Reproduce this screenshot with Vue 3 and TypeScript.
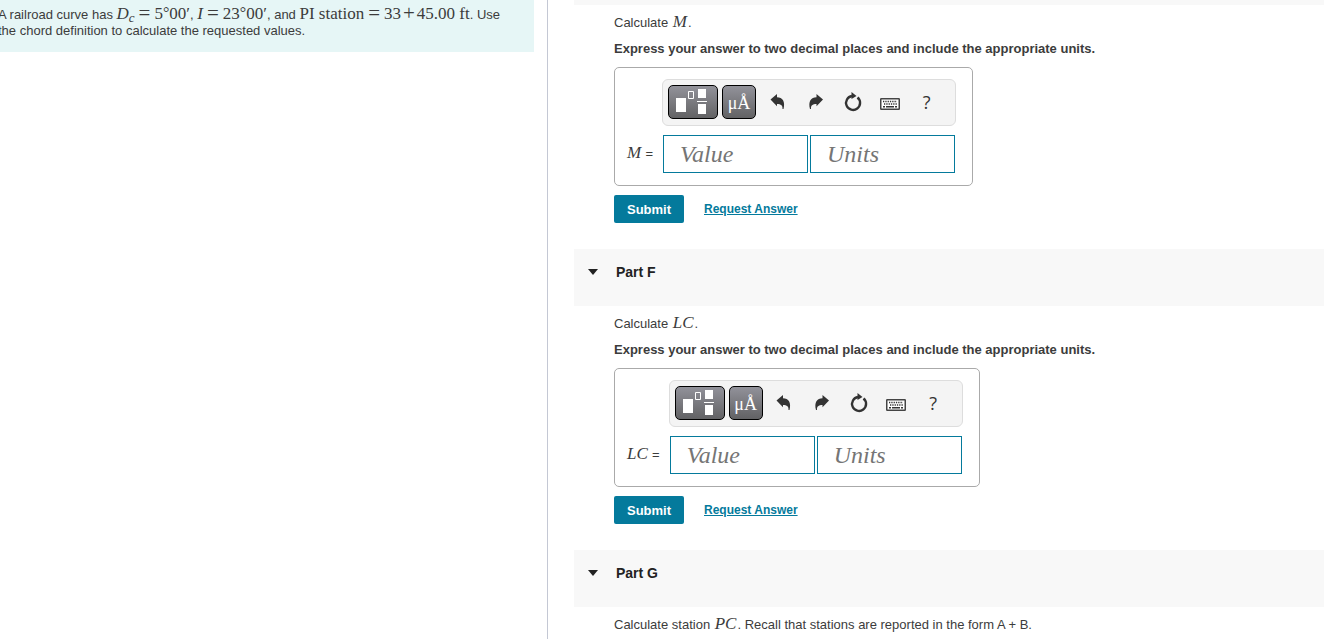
<script setup lang="ts">
interface Part {
  id: string
  symbol: string
  next: string
}

const parts: Part[] = [
  { id: 'e', symbol: 'M', next: 'Part F' },
  { id: 'f', symbol: 'LC', next: 'Part G' },
]
</script>

<template>
  <div class="page">
    <aside class="side">
      <p class="problem">
        <span class="line">A railroad curve has <span class="math"><i>D</i><sub>c</sub><span class="rel">=</span>5<span class="deg">°</span>00′</span>,
        <span class="math"><i>I</i><span class="rel">=</span>23<span class="deg">°</span>00′</span>, and
        <span class="math">PI station<span class="rel">=</span>33<span class="op">+</span>45.00 ft</span>. Use</span>
        <span class="line">the chord definition to calculate the requested values.</span>
      </p>
    </aside>

    <main class="main">
      <div class="strip"></div>
      <template v-for="part in parts" :key="part.id">
        <section class="part">
          <p class="ask">Calculate <i class="math">{{ part.symbol }}</i>.</p>
          <p class="hint">Express your answer to two decimal places and include the appropriate units.</p>

          <form class="answer" @submit.prevent>
            <div class="box">
              <div class="toolbar" role="toolbar" aria-label="Answer tools">
                <button type="button" class="dark wide" aria-label="Templates">
                  <svg width="34" height="26" viewBox="0 0 34 26">
                    <path fill="#fff" d="M0 9h10v14H0zM22 0h8v9h-8zM22 15h8v10h-8zM21 12h10v1H21z" />
                    <path fill="none" stroke="#fff" d="M12.500 2.500h5v7h-5z" />
                  </svg>
                </button>
                <button type="button" class="dark" aria-label="Symbols">μÅ</button>
                <button type="button" class="tool" aria-label="Undo">
                  <svg width="16" height="16" viewBox="0 0 16 16">
                    <path fill="#333" d="M-.500 5.500 6 0v3.200c5.500 0 8.500 4.300 6.500 11.800h-1c.300-3.600-1.500-5-5.500-5v2.300z" />
                  </svg>
                </button>
                <button type="button" class="tool" aria-label="Redo">
                  <svg width="16" height="16" viewBox="0 0 16 16">
                    <path fill="#333" d="M15 5.500 8.500 0v3.200c-5.500 0-8.500 4.300-6.500 11.800h1c-.300-3.600 1.500-5 5.500-5v2.300z" />
                  </svg>
                </button>
                <button type="button" class="tool" aria-label="Reset">
                  <svg width="18" height="20" viewBox="0 0 18 20">
                    <path fill="none" stroke="#333" stroke-width="2.400" d="M13.500 5.500A7 7 0 1 1 8 4" />
                    <path fill="#333" d="M7.500 0 12.500 4 7.500 7z" />
                  </svg>
                </button>
                <button type="button" class="tool" aria-label="Keyboard shortcuts">
                  <svg class="keys" width="20" height="12" viewBox="0 0 20 12">
                    <rect x=".75" y=".75" width="18.500" height="10.500" rx=".5" fill="#fff" stroke="#444" stroke-width="1.500" />
                    <path stroke="#333" stroke-width="1.300" stroke-dasharray="1.300 1" d="M3 3.500h14" />
                    <path stroke="#333" stroke-width="1.300" stroke-dasharray="1.300 1" d="M4 6h13" />
                    <path stroke="#333" stroke-width="1.500" d="M3 8.700h2M6 8.700h8M15 8.700h2" />
                  </svg>
                </button>
                <button type="button" class="tool help" aria-label="Help">?</button>
              </div>
              <label class="name" :for="'value-' + part.id"><i>{{ part.symbol }}</i> <span class="eq">=</span></label>
              <div class="fields">
                <input :id="'value-' + part.id" type="text" placeholder="Value" />
                <input type="text" placeholder="Units" aria-label="Units" />
              </div>
            </div>
            <div class="actions">
              <button type="submit" class="submit">Submit</button>
              <a href="#">Request Answer</a>
            </div>
          </form>
        </section>

        <h2 class="head">
          <button type="button">
            <svg width="10" height="6" viewBox="0 0 10 6"><path fill="#222" d="M0 0h10L5 6z" /></svg>
            {{ part.next }}
          </button>
        </h2>
      </template>
      <section class="part last">
        <p class="ask">Calculate station <i class="math">PC</i>. Recall that stations are reported in the form A + B.</p>
      </section>
    </main>
  </div>
</template>

<style>
body {
  margin: 0;
  overflow: hidden;
}
</style>

<style scoped>
.page {
  display: grid;
  grid-template-columns: 548fr 776fr;
  height: 100vh;
  overflow: hidden;
  background: #fff;
  color: #3c3c3c;
  font: 13px/16px "Liberation Sans", Arial, sans-serif;
}
p,
h2 {
  margin: 0;
}
button {
  font-family: inherit;
  cursor: pointer;
}
.side {
  border-right: 1px solid #c4c8d4;
  overflow: hidden;
}
.problem {
  margin: 0 13px 0 -2px;
  padding: 7px 0 13px;
  background: #e6f6f6;
}
.line {
  display: block;
  white-space: nowrap;
}
.math {
  font-family: "Liberation Serif", "Times New Roman", serif;
  font-size: 17px;
  line-height: 1px;
}
.ask .math {
  margin: 0 1px;
}
.math sub {
  font-size: 13px;
  font-style: italic;
  line-height: 1px;
  vertical-align: -3px;
}
.rel,
.op {
  margin: 0 4px;
  font-size: 21px;
  line-height: 1px;
  vertical-align: -1px;
}
.op {
  margin: 0 2px;
}
.deg {
  font-size: 16px;
  line-height: 1px;
  vertical-align: 1px;
}
.main {
  min-width: 0;
  padding-left: 26px;
}
.strip {
  height: 5px;
  background: #f8f8f8;
}
.part {
  padding: 10px 0 26px 40px;
}
.hint {
  margin-top: 10px;
  font-weight: bold;
}
.answer {
  margin-top: 10px;
}
.box {
  display: inline-grid;
  grid-template-columns: auto auto;
  align-items: center;
  row-gap: 9px;
  box-sizing: border-box;
  height: 119px;
  padding: 11px 16px 12px 12px;
  border: 1px solid #aaa;
  border-radius: 5px;
  vertical-align: top;
}
.toolbar {
  grid-column: 2;
  display: flex;
  align-items: flex-start;
  box-sizing: border-box;
  height: 47px;
  padding: 5px;
  border: 1px solid #ddd;
  border-radius: 6px;
  background: #f4f4f4;
}
.dark {
  display: flex;
  align-items: center;
  justify-content: center;
  box-sizing: border-box;
  width: 34px;
  height: 34px;
  margin-right: 4px;
  padding: 2px 0 0;
  border: 1px solid #000;
  border-radius: 5px;
  background: linear-gradient(#92929a, #626264);
  color: #fff;
  font: 18px/20px "Liberation Serif", "Times New Roman", serif;
}
.wide {
  width: 50px;
  padding: 0;
}
.tool {
  display: flex;
  align-items: center;
  justify-content: center;
  width: 37px;
  height: 34px;
  padding: 0;
  border: 0;
  background: none;
  color: #333;
}
.tool svg {
  overflow: visible;
}
.keys {
  margin-top: 4px;
}
.help {
  font: 18px/20px "Open Sans", sans-serif;
}
.name {
  grid-column: 1;
  padding: 0 9px 2px 0;
  font: 17px/20px "Liberation Serif", "Times New Roman", serif;
}
.eq {
  font: 13px/16px "Liberation Sans", Arial, sans-serif;
}
.fields {
  display: flex;
  gap: 2px;
  padding: 0 1px;
}
.fields input {
  box-sizing: border-box;
  width: 145px;
  height: 38px;
  padding: 0 16px;
  border: 1px solid #047a9c;
  border-radius: 0;
  background: #fff;
  color: #333;
  font: italic 24px/30px "Liberation Serif", "Times New Roman", serif;
}
.fields input::placeholder {
  color: #757575;
}
.actions {
  display: flex;
  align-items: center;
  gap: 20px;
  margin-top: 9px;
}
.submit {
  width: 70px;
  height: 28px;
  padding: 0;
  border: 0;
  border-radius: 2px;
  background: #047a9c;
  color: #fff;
  font-size: 13px;
  font-weight: bold;
}
.actions a {
  color: #047a9c;
  font-size: 12px;
  font-weight: bold;
}
.head {
  height: 57px;
  background: #f8f8f8;
}
.head button {
  display: flex;
  align-items: center;
  gap: 18px;
  padding: 15px 14px;
  border: 0;
  background: none;
  color: #222;
  font-size: 14px;
  font-weight: bold;
  line-height: 16px;
}
</style>
